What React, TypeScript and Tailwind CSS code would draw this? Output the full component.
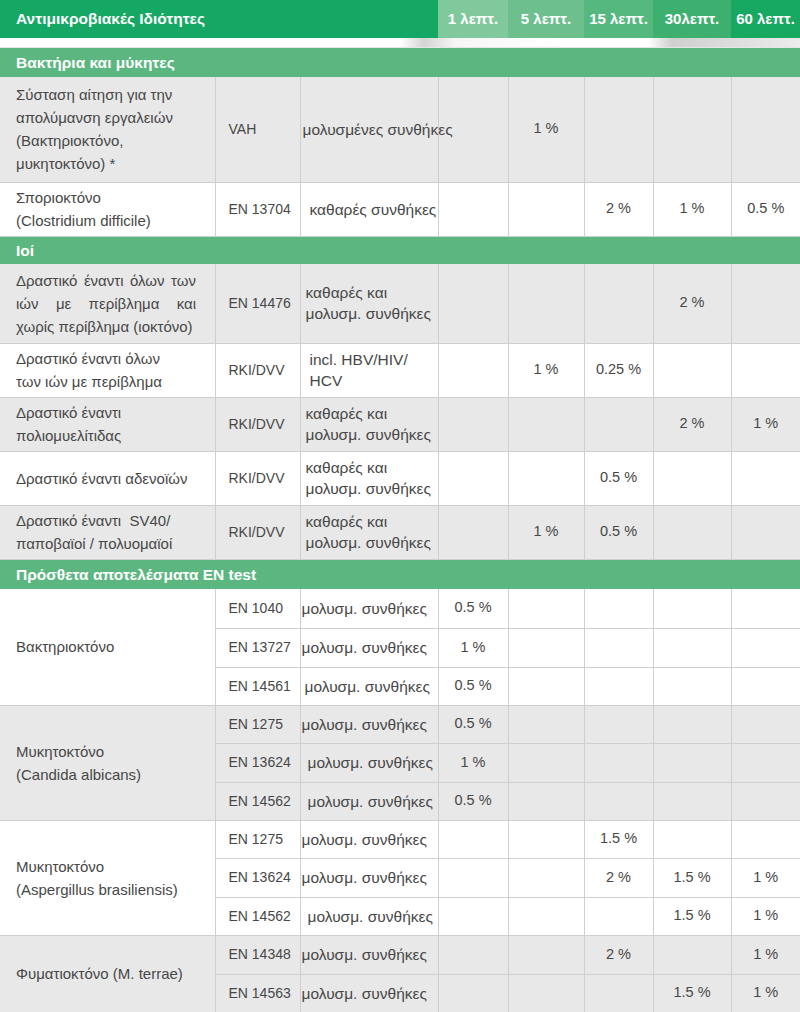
import type { ReactNode } from "react"

type Row = {
    name?: ReactNode
    nameSpan?: number
    code: string
    cond: ReactNode
    condPad?: string
    vals: string[]
    h: number
}

type Block = { title: string; rows: Row[]; shades: boolean[] }

const times = ["1 λεπτ.", "5 λεπτ.", "15 λεπτ.", "30λεπτ.", "60 λεπτ."]
const headShades = ["bg-[#80c99d]", "bg-[#6dc08e]", "bg-[#55b87f]", "bg-[#3daf6f]", "bg-[#17a862]"]

const both = (
    <>
        καθαρές και
        <br />
        μολυσμ. συνθήκες
    </>
)

const blocks: Block[] = [
    {
        title: "Βακτήρια και μύκητες",
        shades: [true, false],
        rows: [
            {
                name: (
                    <>
                        Σύσταση αίτηση για την
                        <br />
                        απολύμανση εργαλειών
                        <br />
                        (Βακτηριοκτόνο,
                        <br />
                        μυκητοκτόνο) *
                    </>
                ),
                code: "VAH",
                cond: "μολυσμένες συνθήκες",
                condPad: "pl-[2px]",
                vals: ["", "1 %", "", "", ""],
                h: 105,
            },
            {
                name: (
                    <>
                        Σποριοκτόνο
                        <br />
                        (Clostridium difficile)
                    </>
                ),
                code: "EN 13704",
                cond: "καθαρές συνθήκες",
                condPad: "pl-[9px]",
                vals: ["", "", "2 %", "1 %", "0.5 %"],
                h: 54,
            },
        ],
    },
    {
        title: "Ιοί",
        shades: [true, false, true, false, true],
        rows: [
            {
                name: (
                    <div className="w-[180px]">
                        <div className="text-justify [text-align-last:justify]">Δραστικό έναντι όλων των</div>
                        <div className="text-justify [text-align-last:justify]">ιών με περίβλημα και</div>
                        <div className="whitespace-nowrap">χωρίς περίβλημα (ιοκτόνο)</div>
                    </div>
                ),
                code: "EN 14476",
                cond: both,
                condPad: "pl-[5px]",
                vals: ["", "", "", "2 %", ""],
                h: 79,
            },
            {
                name: (
                    <>
                        Δραστικό έναντι όλων
                        <br />
                        των ιών με περίβλημα
                    </>
                ),
                code: "RKI/DVV",
                cond: (
                    <>
                        incl. HBV/HIV/
                        <br />
                        HCV
                    </>
                ),
                condPad: "pl-[9px]",
                vals: ["", "1 %", "0.25 %", "", ""],
                h: 54,
            },
            {
                name: (
                    <>
                        Δραστικό έναντι
                        <br />
                        πολιομυελίτιδας
                    </>
                ),
                code: "RKI/DVV",
                cond: both,
                condPad: "pl-[5px]",
                vals: ["", "", "", "2 %", "1 %"],
                h: 54,
            },
            {
                name: "Δραστικό έναντι αδενοϊών",
                code: "RKI/DVV",
                cond: both,
                condPad: "pl-[5px]",
                vals: ["", "", "0.5 %", "", ""],
                h: 54,
            },
            {
                name: (
                    <>
                        Δραστικό έναντι&nbsp; SV40/
                        <br />
                        παποβαϊοί / πολυομαϊοί
                    </>
                ),
                code: "RKI/DVV",
                cond: both,
                condPad: "pl-[5px]",
                vals: ["", "1 %", "0.5 %", "", ""],
                h: 54,
            },
        ],
    },
    {
        title: "Πρόσθετα αποτελέσματα EN test",
        shades: [false, false, false, true, true, true, false, false, false, true, true],
        rows: [
            { name: "Βακτηριοκτόνο", nameSpan: 3, code: "EN 1040", cond: "μολυσμ. συνθήκες", vals: ["0.5 %", "", "", "", ""], h: 39 },
            { code: "EN 13727", cond: "μολυσμ. συνθήκες", vals: ["1 %", "", "", "", ""], h: 39 },
            { code: "EN 14561", cond: "μολυσμ. συνθήκες", condPad: "pl-[4px]", vals: ["0.5 %", "", "", "", ""], h: 38 },
            {
                name: (
                    <>
                        Μυκητοκτόνο
                        <br />
                        (Candida albicans)
                    </>
                ),
                nameSpan: 3,
                code: "EN 1275",
                cond: "μολυσμ. συνθήκες",
                vals: ["0.5 %", "", "", "", ""],
                h: 38,
            },
            { code: "EN 13624", cond: "μολυσμ. συνθήκες", condPad: "pl-[7px]", vals: ["1 %", "", "", "", ""], h: 39 },
            { code: "EN 14562", cond: "μολυσμ. συνθήκες", condPad: "pl-[7px]", vals: ["0.5 %", "", "", "", ""], h: 38 },
            {
                name: (
                    <>
                        Μυκητοκτόνο
                        <br />
                        (Aspergillus brasiliensis)
                    </>
                ),
                nameSpan: 3,
                code: "EN 1275",
                cond: "μολυσμ. συνθήκες",
                vals: ["", "", "1.5 %", "", ""],
                h: 38,
            },
            { code: "EN 13624", cond: "μολυσμ. συνθήκες", vals: ["", "", "2 %", "1.5 %", "1 %"], h: 39 },
            { code: "EN 14562", cond: "μολυσμ. συνθήκες", condPad: "pl-[7px]", vals: ["", "", "", "1.5 %", "1 %"], h: 38 },
            { name: "Φυματιοκτόνο (M. terrae)", nameSpan: 2, code: "EN 14348", cond: "μολυσμ. συνθήκες", vals: ["", "", "2 %", "", "1 %"], h: 39 },
            { code: "EN 14563", cond: "μολυσμ. συνθήκες", vals: ["", "", "", "1.5 %", "1 %"], h: 38 },
        ],
    },
]

const line = "border-b border-r border-[#cfcfcf]"

export default function App() {
    return (
        <div className="w-[800px] bg-white text-[#474747] font-['Liberation_Sans',Arial,sans-serif]">
            <table className="w-[800px] table-fixed border-collapse">
                <colgroup>
                    <col className="w-[215px]" />
                    <col className="w-[85px]" />
                    <col className="w-[138px]" />
                    <col className="w-[70px]" />
                    <col className="w-[76px]" />
                    <col className="w-[69px]" />
                    <col className="w-[78px]" />
                    <col className="w-[69px]" />
                </colgroup>
                <tbody>
                    <tr className="h-[38px]">
                        <td colSpan={3} className="bg-[#14a864] pl-4 text-[15.5px] font-bold text-white">
                            Αντιμικροβιακές Ιδιότητες
                        </td>
                        {times.map((t, i) => (
                            <td key={t} className={`${headShades[i]} text-center text-[15px] font-bold text-white`}>
                                {t}
                            </td>
                        ))}
                    </tr>
                    <tr className="h-[9px]">
                        <td
                            colSpan={8}
                            className="bg-[linear-gradient(90deg,#ffffff_0%,#ffffff_50%,#d4d4d4_53%,#f6f6f6_57%,#ffffff_70%,#ffffff_81%,#cfcfcf_84%,#ececec_100%)] border-b border-[#e6e6e6]"
                        />
                    </tr>
                    {blocks.map((b) => (
                        <BlockRows key={b.title} block={b} />
                    ))}
                </tbody>
            </table>
        </div>
    )
}

function BlockRows({ block }: { block: Block }) {
    return (
        <>
            <tr className={block.title === "Ιοί" ? "h-[28px]" : "h-[30px]"}>
                <td colSpan={8} className="bg-[#5bb77f] pl-4 text-[15.5px] font-bold text-white">
                    {block.title}
                </td>
            </tr>
            {block.rows.map((r, i) => {
                const grey = block.shades[i]
                const bg = grey ? "bg-[#e8e8e8]" : "bg-white"
                return (
                    <tr key={i} style={{ height: r.h }} className={bg}>
                        {r.name !== undefined && (
                            <td
                                rowSpan={r.nameSpan ?? 1}
                                className={`${line} pl-4 pr-3 text-[15px] leading-[23px]`}
                            >
                                {r.name}
                            </td>
                        )}
                        <td className={`${line} pl-[13px] text-[14px] whitespace-nowrap`}>{r.code}</td>
                        <td className={`${line} ${r.condPad ?? "pl-[1px]"} text-[15.5px] leading-[21px] whitespace-nowrap overflow-visible`}>
                            {r.cond}
                        </td>
                        {r.vals.map((v, j) => (
                            <td
                                key={j}
                                className={`${j === 4 ? "border-b border-[#cfcfcf]" : line} text-center text-[14.5px] whitespace-nowrap`}
                            >
                                {v}
                            </td>
                        ))}
                    </tr>
                )
            })}
        </>
    )
}
